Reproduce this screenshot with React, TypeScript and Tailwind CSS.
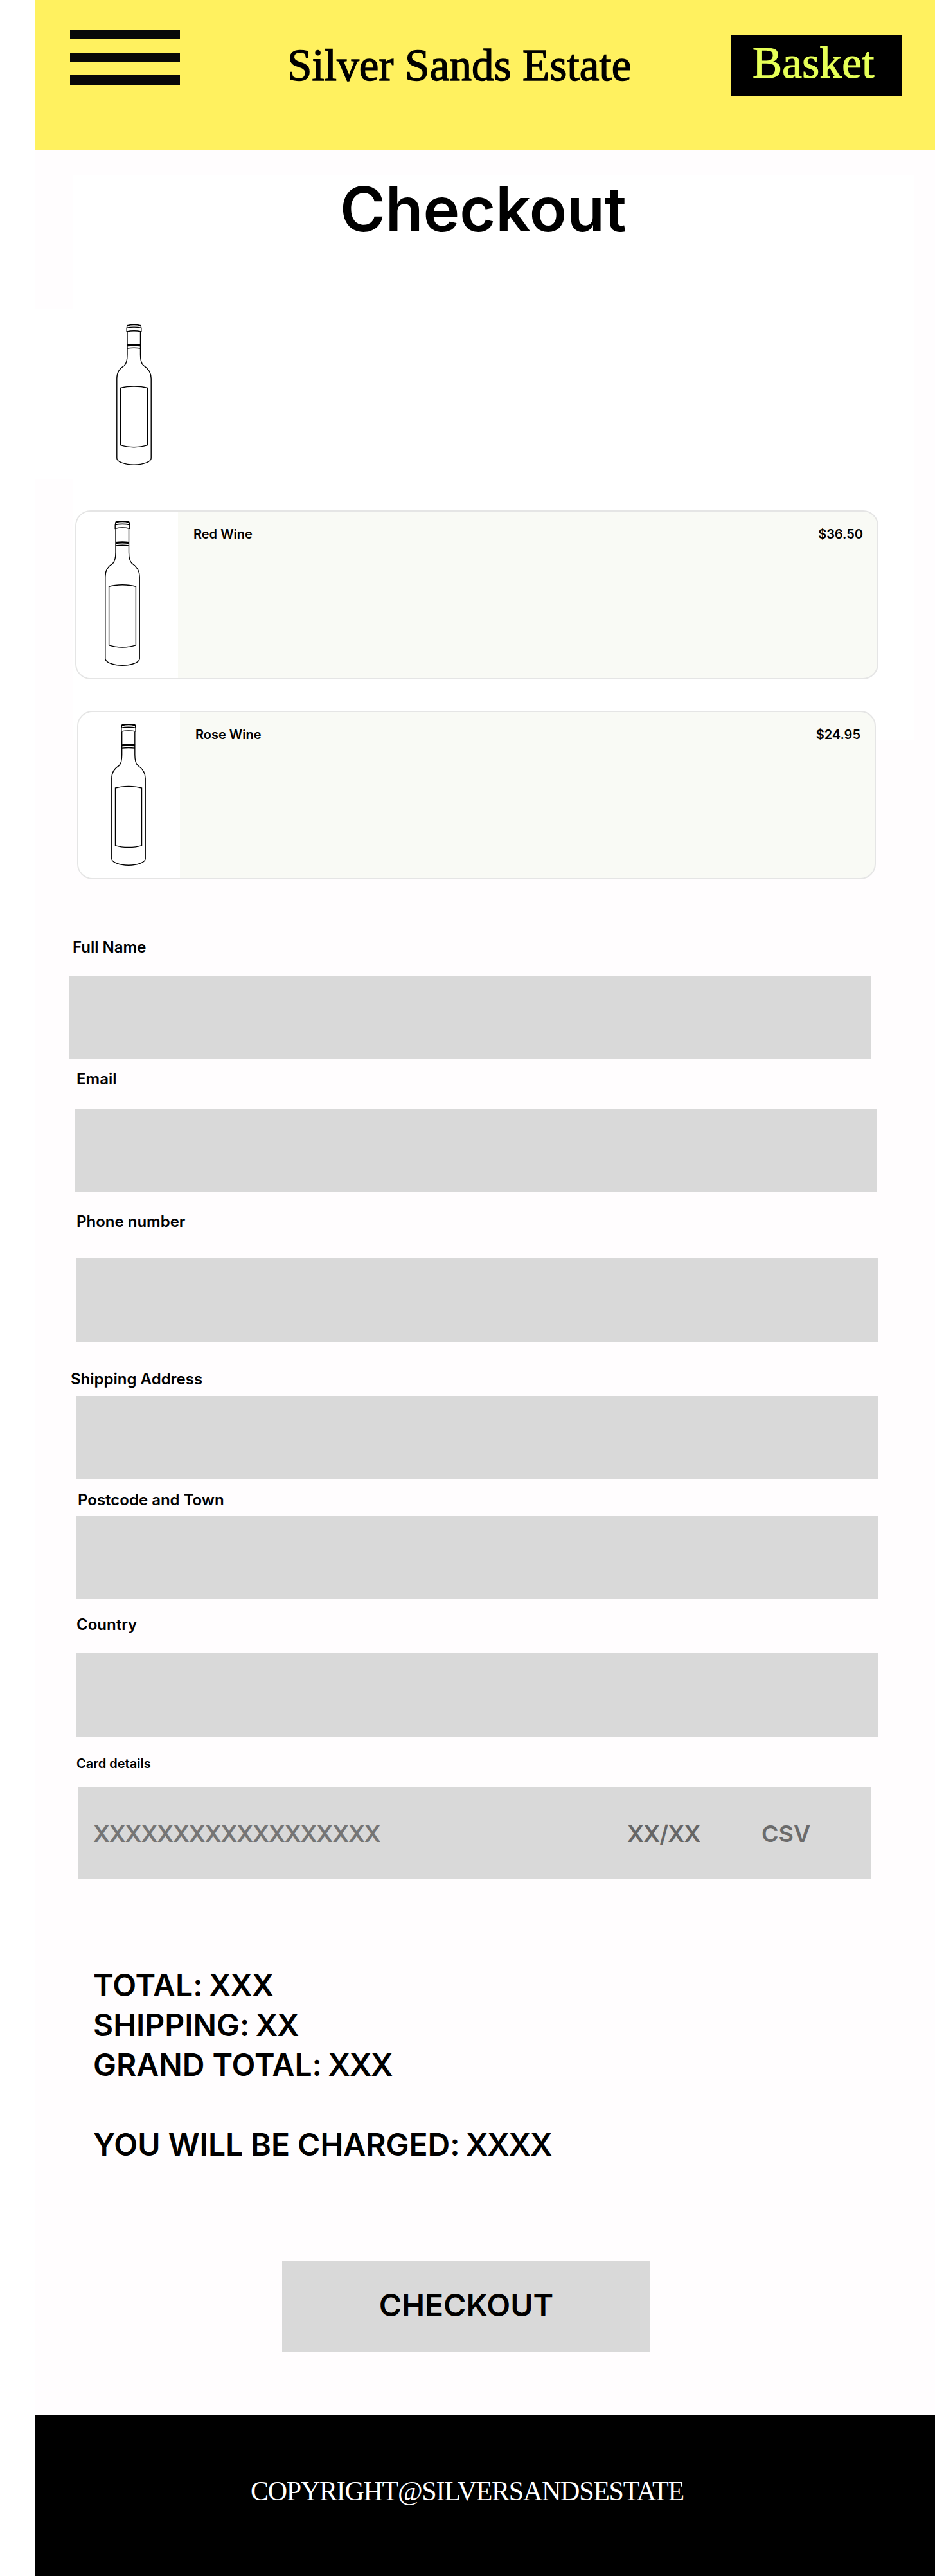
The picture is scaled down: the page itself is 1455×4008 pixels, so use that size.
const SANS = "font-['Inter',sans-serif] font-semibold";
const SERIF = "font-['Liberation_Serif',serif]";

function Bottle({ className }: { className: string }) {
  return (
    <svg
      className={className}
      viewBox="0 0 55 220"
      preserveAspectRatio="none"
      fill="none"
      stroke="#000"
      strokeWidth="1.4"
    >
      <path d="M17 12.5V48c0 10-1.500 14-4.500 17C5 69 .8 76.500 .8 85v124c0 5.500 12 10.300 26.700 10.300S54.200 214.500 54.200 209V85c0-8.500-4.500-15.500-12-20.300-3.500-3-4.700-7-4.700-16.700V12.500" />
      <path d="M6.600 99.500c12-3.300 30-3.300 41.800 0v89.200c-12 4-30 4-41.800 0z" />
      <path d="M17 2.500c5-2 16-2 21 0l.8 4.500v5c-7-1.500-15.500-1.500-22.600 0V7z" />
      <path d="M17 2.300c6-1.600 15-1.600 21 0" strokeWidth="2.600" />
      <path d="M16.500 6.300c6-1.500 16-1.500 22 0" strokeWidth="1.600" />
      <path d="M17 33.600c6-.6 15-.6 20.700 0" strokeWidth="3.200" />
      <path d="M17 38c6-.8 15-.8 20.700 0" />
    </svg>
  );
}

function WineCard({
  name,
  price,
  card,
  photo,
  bottle,
}: {
  name: string;
  price: string;
  card: string;
  photo: string;
  bottle: string;
}) {
  return (
    <article
      className={`flex shrink-0 overflow-hidden rounded-[24px] border-2 border-[#e5e5e5] bg-[#f9faf5] ${card}`}
    >
      <div className={`shrink-0 bg-white ${photo}`}>
        <Bottle className={bottle} />
      </div>
      <div className={`ml-[24px] mr-[22px] mt-[23px] flex h-6 grow justify-between text-[20px] leading-6 ${SANS}`}>
        <h2>{name}</h2>
        <p>{price}</p>
      </div>
    </article>
  );
}

const FIELDS = [
  { label: "Full Name", id: "name", labelCls: "ml-[58px]", box: "ml-[53px] mt-[30px] h-[129px]" },
  { label: "Email", id: "email", labelCls: "ml-[64px] mt-[16px]", box: "ml-[62px] mt-[33px] h-[129px]" },
  { label: "Phone number", id: "phone", labelCls: "ml-[64px] mt-[30px]", box: "ml-[64px] mt-[43px] h-[130px]" },
  { label: "Shipping Address", id: "address", labelCls: "ml-[55px] mt-[42px]", box: "ml-[64px] mt-[12px] h-[129px]" },
  { label: "Postcode and Town", id: "postcode", labelCls: "ml-[66px] mt-[17px]", box: "ml-[64px] mt-[11px] h-[129px]" },
  { label: "Country", id: "country", labelCls: "ml-[64px] mt-[24px]", box: "ml-[64px] mt-[30px] h-[130px]" },
];

const TOTALS = [
  { label: "TOTAL", value: ": XXX", cls: "" },
  { label: "SHIPPING", value: ": XX", cls: "" },
  { label: "GRAND TOTAL", value: ": XXX", cls: "" },
  { label: "YOU WILL BE CHARGED", value: ": XXXX", cls: "mt-[62px]" },
];

export default function App() {
  return (
    <div className="h-[4008px] w-[1455px] overflow-hidden bg-white pl-[55px] text-black">
      <div className="flex h-full flex-col bg-[#fffdfe]">
        <header className="flex h-[233px] shrink-0 items-start bg-[#fff15f]">
          <button className="ml-[54px] mt-[46px] flex h-[86px] w-[171px] flex-col justify-between" aria-label="Menu">
            <span className="h-[15px] w-full bg-[#080808]" />
            <span className="h-[15px] w-full bg-[#080808]" />
            <span className="h-[15px] w-full bg-[#080808]" />
          </button>
          <div
            className={`ml-[167px] mt-[62px] w-[540px] whitespace-nowrap text-[69px] leading-[80px] tracking-[0.15px] [-webkit-text-stroke:1.4px_#000] ${SERIF}`}
          >
            Silver Sands Estate
          </div>
          <button
            className={`ml-[151px] mt-[54px] h-[96px] w-[265px] bg-black pb-[8px] pl-[33px] text-left text-[69px] leading-[88px] tracking-[0.3px] text-[#e6ff57] [-webkit-text-stroke:1.2px_#e6ff57] ${SERIF}`}
          >
            Basket
          </button>
        </header>

        <main className="flex grow flex-col">
          <section className="ml-[58px] mt-[39px] flex h-[880px] w-[1309px] shrink-0 flex-col bg-white">
            <h1 className={`-mt-[5px] ml-[416px] h-[116px] whitespace-nowrap text-[96px] leading-[116px] ${SANS}`}>
              Checkout
            </h1>
            <div className="-ml-[58px] mt-[98px] h-[265px] w-[300px] shrink-0 bg-white pl-[126px] pt-[23px]">
              <Bottle className="h-[220px] w-[55px]" />
            </div>
            <WineCard
              name="Red Wine"
              price="$36.50"
              card="ml-[4px] mt-[48px] h-[263px] w-[1250px]"
              photo="w-[158px] pl-[44px] pt-[14px]"
              bottle="h-[226px] w-[55px]"
            />
            <WineCard
              name="Rose Wine"
              price="$24.95"
              card="ml-[7px] mt-[49px] h-[262px] w-[1243px]"
              photo="w-[158px] pl-[51px] pt-[18px]"
              bottle="h-[221px] w-[54px]"
            />
          </section>

          <form className={`mt-[306px] flex flex-col ${SANS}`}>
            {FIELDS.map((f) => (
              <div key={f.id} className="flex flex-col">
                <label htmlFor={f.id} className={`h-[30px] pt-px text-[24px] leading-[30px] ${f.labelCls}`}>
                  {f.label}
                </label>
                <input id={f.id} className={`w-[1248px] bg-[#d9d9d9] ${f.box}`} />
              </div>
            ))}
            <p className="ml-[64px] mt-[30px] h-6 text-[20px] leading-6">Card details</p>
            <div className="ml-[66px] mt-[25px] flex h-[142px] w-[1235px] items-center whitespace-nowrap bg-[#d9d9d9] pl-[24px] pt-[2px] text-[36px] leading-[44px] text-[#757575]">
              <span className="w-[831px] tracking-[-1.1px]">XXXXXXXXXXXXXXXXXX</span>
              <span className="w-[209px] tracking-[-0.7px] text-[#666]">XX/XX</span>
              <span className="text-[#6b6b6b]">CSV</span>
            </div>
          </form>

          <section className={`ml-[90px] mt-[135px] flex flex-col text-[48px] leading-[62px] ${SANS}`}>
            {TOTALS.map((t) => (
              <p key={t.label} className={t.cls}>
                {t.label}
                <span className="tracking-[-1.25px]">{t.value}</span>
              </p>
            ))}
          </section>

          <button
            className={`ml-[384px] mt-[150px] flex h-[142px] w-[573px] items-center justify-center bg-[#d9d9d9] pb-[4px] text-[48px] leading-[58px] ${SANS}`}
          >
            CHECKOUT
          </button>
        </main>

        <footer className={`h-[250px] shrink-0 bg-black pl-[335px] pt-[94px] text-[42px] leading-[48px] tracking-[-1.27px] text-white ${SERIF}`}>
          COPYRIGHT@SILVERSANDSESTATE
        </footer>
      </div>
    </div>
  );
}
